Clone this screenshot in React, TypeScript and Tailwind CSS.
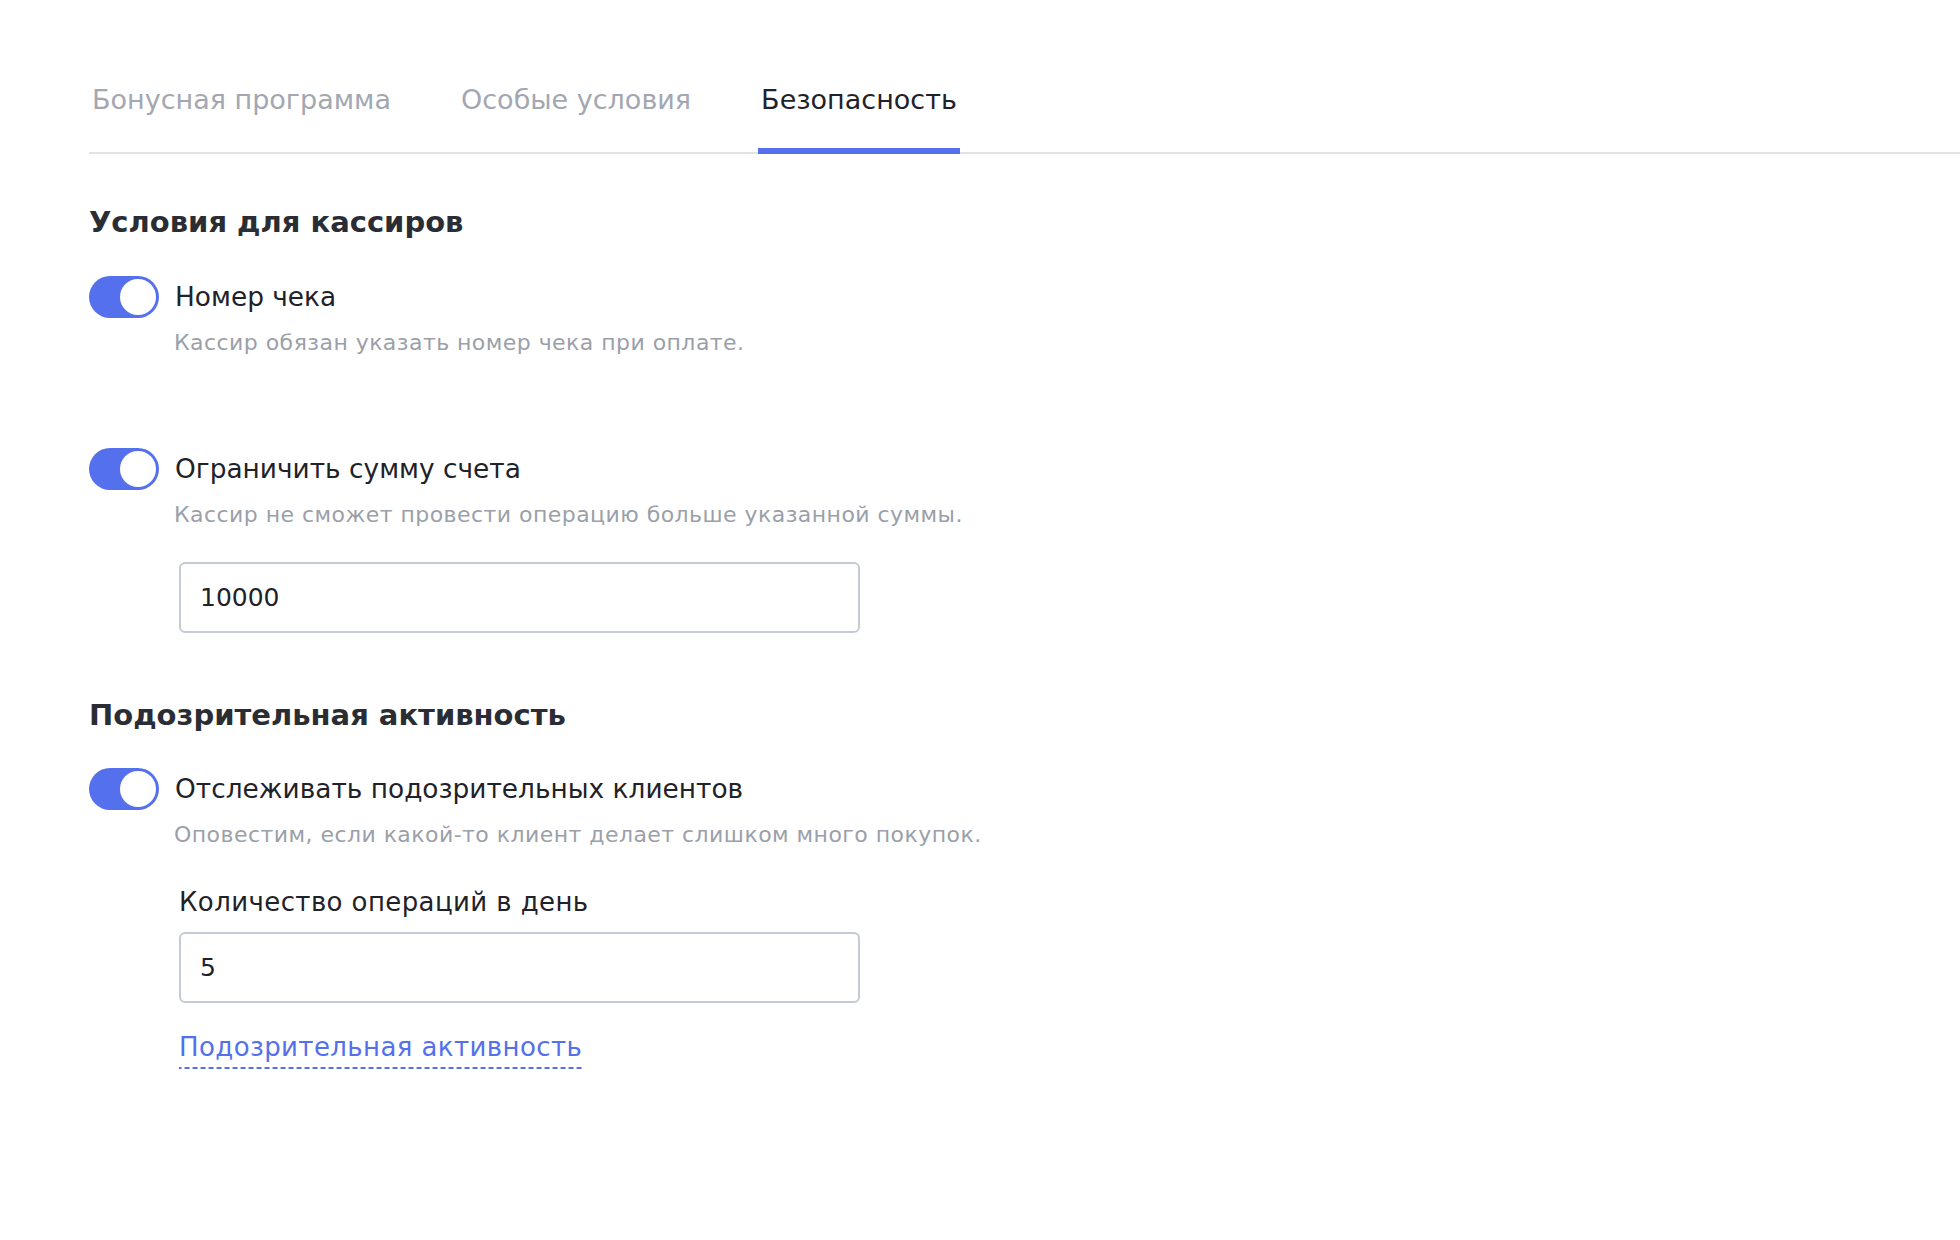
import React, { useState } from "react";

const font = { fontFamily: '"DejaVu Sans", "Noto Sans", sans-serif' };

const tabs = ["Бонусная программа", "Особые условия", "Безопасность"];

function Toggle({ on }: { on: boolean }) {
  return (
    <div
      className={
        "flex h-[42px] w-[70px] shrink-0 items-center rounded-full p-[3px] " +
        (on ? "justify-end bg-[#5570ec]" : "justify-start bg-[#d3d6de]")
      }
    >
      <div className="h-[36px] w-[36px] rounded-full bg-white" />
    </div>
  );
}

function SwitchRow({ label, hint, className }: { label: string; hint: string; className?: string }) {
  return (
    <div className={className}>
      <div className="flex items-center gap-4">
        <Toggle on />
        <span className="text-[26.4px] leading-8 text-[#1f2229]">{label}</span>
      </div>
      <p className="mt-[11px] pl-[85px] text-[22px] leading-7 tracking-[0.45px] text-[#9b9fa9]">{hint}</p>
    </div>
  );
}

function Field({ value, className }: { value: string; className?: string }) {
  return (
    <div
      className={
        "ml-[90px] flex h-[71px] w-[681px] items-center rounded-md border-2 border-[#c6cad5] bg-white px-[19px] text-[25px] text-[#1f2229] " +
        (className ?? "")
      }
    >
      {value}
    </div>
  );
}

export default function App() {
  const [active, setActive] = useState(2);

  return (
    <div className="min-h-screen bg-white pl-[89px] pt-[84px]" style={font}>
      <div className="flex gap-[64px] border-b-2 border-[#e1e3e8]">
        {tabs.map((t, i) => (
          <button
            key={t}
            onClick={() => setActive(i)}
            className={
              "-mb-[2px] border-b-[6px] px-[3px] pb-[32px] text-[27px] leading-8 " +
              (i === active ? "border-[#5570ec] text-[#1f2229]" : "border-transparent text-[#a3a7b2]")
            }
          >
            {t}
          </button>
        ))}
      </div>

      <div className="flex flex-col">
        <h2 className="mt-[50px] text-[29px] font-bold leading-9 text-[#2a2d33]">Условия для кассиров</h2>

        <SwitchRow
          className="mt-[36px]"
          label="Номер чека"
          hint="Кассир обязан указать номер чека при оплате."
        />
        <SwitchRow
          className="mt-[91px]"
          label="Ограничить сумму счета"
          hint="Кассир не сможет провести операцию больше указанной суммы."
        />
        <Field value="10000" className="mt-[33px]" />

        <h2 className="mt-[64px] text-[29px] font-bold leading-9 text-[#2a2d33]">Подозрительная активность</h2>

        <SwitchRow
          className="mt-[35px]"
          label="Отслеживать подозрительных клиентов"
          hint="Оповестим, если какой-то клиент делает слишком много покупок."
        />

        <p className="ml-[90px] mt-[37px] text-[26px] leading-8 tracking-[0.4px] text-[#1f2229]">
          Количество операций в день
        </p>
        <Field value="5" className="mt-[14px]" />

        <div className="ml-[90px] mt-[28px]">
          <a
            href="#"
            className="inline-block bg-[linear-gradient(to_right,#5570ec_5px,transparent_5px)] bg-[length:8px_2px] bg-bottom bg-repeat-x pb-[6px] text-[26px] leading-8 tracking-[0.4px] text-[#5570ec]"
          >
            Подозрительная активность
          </a>
        </div>
      </div>
    </div>
  );
}
